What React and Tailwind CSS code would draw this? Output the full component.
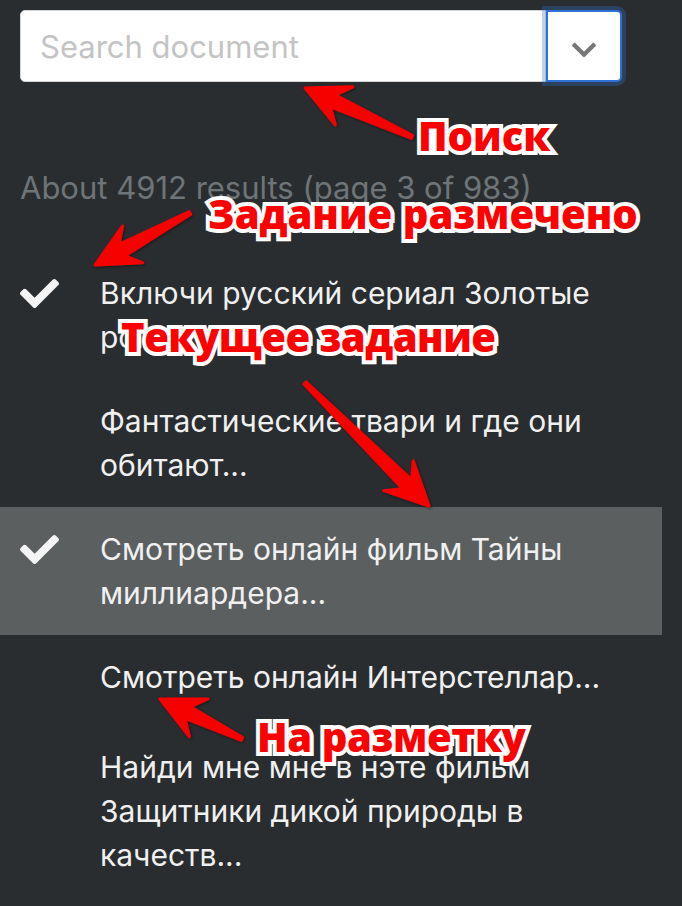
import { FaCheck, FaChevronDown } from "react-icons/fa";

const items = [
  { id: 1, title: "Включи русский сериал Золотые рога...", done: true },
  { id: 2, title: "Фантастические твари и где они обитают...", done: false },
  { id: 3, title: "Смотреть онлайн фильм Тайны миллиардера...", done: true, active: true },
  { id: 4, title: "Смотреть онлайн Интерстеллар...", done: false },
  { id: 5, title: "Найди мне мне в нэте фильм Защитники дикой природы в качеств...", done: false },
];

// annotation arrows: [tail, tip]
const arrows = [
  [[412, 137], [305, 88]],
  [[190, 213], [95, 265]],
  [[305, 383], [429, 506]],
  [[242, 739], [160, 699]],
];

const labels = [
  { text: "Поиск", cls: "left-[418px] top-[116px]" },
  { text: "Задание размечено", cls: "left-[208px] top-[194px]" },
  { text: "Текущее задание", cls: "left-[121px] top-[317px] tracking-[-0.5px]" },
  { text: "На разметку", cls: "left-[257px] top-[717px] tracking-[-0.4px]" },
];

function arrowPoints(tail, tip, head = 43, half = 21, shaft = 6.5) {
  const [tx, ty] = tail;
  const dx = tip[0] - tx;
  const dy = tip[1] - ty;
  const len = Math.hypot(dx, dy);
  const ux = dx / len;
  const uy = dy / len;
  const at = (s, w) => `${tx + ux * s - uy * w},${ty + uy * s + ux * w}`;
  return [
    at(0, 1.5),
    at(len - head * 0.72, shaft),
    at(len - head, half),
    at(len, 0),
    at(len - head, -half),
    at(len - head * 0.72, -shaft),
    at(0, -1.5),
  ].join(" ");
}

const App = () => {
  return (
    <div className="relative min-h-screen overflow-hidden bg-[#2a2d2f] font-['Inter','Roboto',sans-serif]">
      <div className="px-5 pt-[10px]">
        <div className="flex h-[72px] w-[602px]">
          <input
            className="h-full min-w-0 flex-1 rounded-l-[5px] border border-[#d4d4d4] bg-white px-[19px] text-[31px] text-[#333] outline-none placeholder:text-[#c4c4c4]"
            placeholder="Search document"
          />
          <button className="relative z-10 flex h-full w-[76px] items-center justify-center rounded-r-[5px] border-2 border-[#2f70d4] bg-white shadow-[0_0_0_4px_rgba(47,112,212,0.3)]">
            <FaChevronDown size={28} className="mt-2 text-[#777]" />
          </button>
        </div>
      </div>

      <p className="mt-[84px] px-5 text-[31px] leading-[44px] text-[#6d7579]">
        About 4912 results (page 3 of 983)
      </p>

      <ul className="mt-[41px] mr-5">
        {items.map((item) => (
          <li
            key={item.id}
            className={`flex min-h-[90px] py-5 pl-5 ${item.active ? "bg-[#5b5f60]" : ""}`}
          >
            <div className="flex h-[44px] w-[80px] shrink-0 items-center">
              {item.done && <FaCheck size={39} className="text-[#f4f4f4]" />}
            </div>
            <div className="flex-1 pr-5 text-[30px] leading-[44px] text-[#f0f0f0]">
              {item.title}
            </div>
          </li>
        ))}
      </ul>

      <svg className="pointer-events-none absolute inset-0 h-full w-full">
        <defs>
          <filter id="arrowShadow" x="-20%" y="-20%" width="140%" height="140%">
            <feDropShadow dx="1" dy="1" stdDeviation="1.5" floodColor="#000" floodOpacity="0.5" />
          </filter>
        </defs>
        {arrows.map(([tail, tip], i) => (
          <polygon
            key={i}
            points={arrowPoints(tail, tip)}
            fill="#f70000"
            stroke="#f70000"
            strokeWidth="3"
            strokeLinejoin="round"
            filter="url(#arrowShadow)"
          />
        ))}
      </svg>

      {labels.map((label) => (
        <span
          key={label.text}
          className={`absolute whitespace-nowrap font-['Open_Sans','Liberation_Sans',sans-serif] text-[40px] font-extrabold leading-none text-[#ff0000] [-webkit-text-stroke:8px_white] [paint-order:stroke_fill] ${label.cls}`}
        >
          {label.text}
        </span>
      ))}
    </div>
  );
};

export default App;
